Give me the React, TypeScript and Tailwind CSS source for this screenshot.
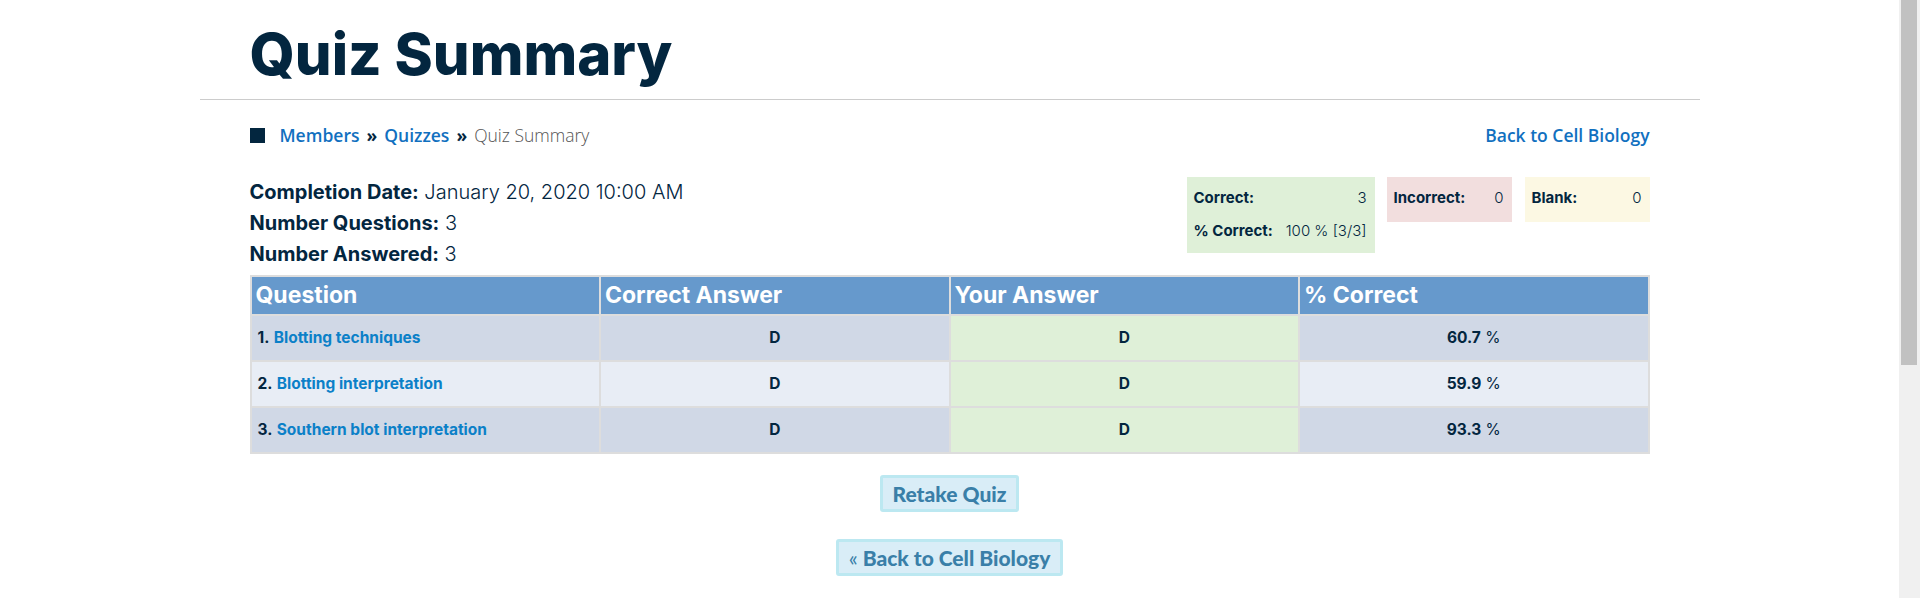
import React from "react";

const navy = "text-[#03263f]";

function Breadcrumbs() {
  return (
    <div className="flex items-center justify-between h-[30px] mt-[20px] font-['Open_Sans',sans-serif] text-[17.5px]">
      <div className="flex items-center">
        <span className="block w-[15px] h-[15px] bg-[#03263f]" />
        <a className="ml-[15px] font-semibold text-[#1170bf]">Members</a>
        <span className={`mx-[7px] font-bold ${navy}`}>»</span>
        <a className="font-semibold text-[#1170bf]">Quizzes</a>
        <span className={`mx-[7px] font-bold ${navy}`}>»</span>
        <span className="font-light text-[#555555]">Quiz Summary</span>
      </div>
      <a className="font-semibold text-[#1170bf]">Back to Cell Biology</a>
    </div>
  );
}

function Info() {
  return (
    <div className={`font-['Inter',sans-serif] text-[20px] leading-[31px] ${navy}`}>
      <div>
        <span className="font-bold">Completion Date:</span>{" "}
        <span className="font-light">January 20, 2020 10:00 AM</span>
      </div>
      <div>
        <span className="font-bold">Number Questions:</span> <span className="font-light">3</span>
      </div>
      <div>
        <span className="font-bold">Number Answered:</span> <span className="font-light">3</span>
      </div>
    </div>
  );
}

function Stats() {
  return (
    <div className={`flex items-start font-['Inter',sans-serif] text-[15px] leading-[33px] ${navy}`}>
      <div className="bg-[#dff0d8] pt-[4px] pb-[6px] pl-[7px] pr-[8px] w-[188px] grid grid-cols-[auto_1fr] gap-x-[6px]">
        <span className="font-bold">Correct:</span>
        <span className="text-right font-light">3</span>
        <span className="font-bold">% Correct:</span>
        <span className="text-right font-light">100 % [3/3]</span>
      </div>
      <div className="ml-[12px] bg-[#f2dede] pt-[4px] pb-[8px] pl-[7px] pr-[8px] w-[125px] flex justify-between">
        <span className="font-bold">Incorrect:</span>
        <span className="font-light">0</span>
      </div>
      <div className="ml-[13px] bg-[#fcf8e3] pt-[4px] pb-[8px] pl-[7px] pr-[8px] w-[125px] flex justify-between">
        <span className="font-bold">Blank:</span>
        <span className="font-light">0</span>
      </div>
    </div>
  );
}

const rows = [
  { n: "1.", q: "Blotting techniques", c: "D", y: "D", p: "60.7", bg: "bg-[#d0d8e6]" },
  { n: "2.", q: "Blotting interpretation", c: "D", y: "D", p: "59.9", bg: "bg-[#e8edf5]" },
  { n: "3.", q: "Southern blot interpretation", c: "D", y: "D", p: "93.3", bg: "bg-[#d0d8e6]" },
];

function ResultsTable() {
  const th = "border-2 border-[#dddddd] bg-[#6699cc] text-white text-left font-bold text-[23px] h-[39px] px-[4px] py-0 leading-[35px]";
  const td = "border-2 border-[#dddddd] h-[46px] px-[6px] py-0";
  return (
    <table className={`w-full table-fixed border-collapse mt-[5px] font-['Inter',sans-serif] ${navy}`}>
      <thead>
        <tr>
          <th className={th}>Question</th>
          <th className={th}>Correct Answer</th>
          <th className={th}>Your Answer</th>
          <th className={th}>% Correct</th>
        </tr>
      </thead>
      <tbody>
        {rows.map((r) => (
          <tr key={r.n} className={`${r.bg} text-[15.5px]`}>
            <td className={td}>
              <span className="font-bold">{r.n}</span>{" "}
              <a className="font-bold text-[#0b80c8]">{r.q}</a>
            </td>
            <td className={`${td} text-center font-bold`}>{r.c}</td>
            <td className={`${td} text-center font-bold bg-[#dff0d8]`}>{r.y}</td>
            <td className={`${td} text-center`}>
              <span className="font-bold">{r.p}</span> <span className="font-normal">%</span>
            </td>
          </tr>
        ))}
      </tbody>
    </table>
  );
}

function Buttons() {
  const btn =
    "h-[37px] px-[10px] flex items-center bg-[#d9edf7] border-[3px] border-[#bce8f1] rounded-[3px] text-[#3a7fa8] font-black text-[21px] font-['Lato',sans-serif]";
  return (
    <div className="flex flex-col items-center mt-[21px]">
      <button className={btn}>Retake Quiz</button>
      <button className={`${btn} mt-[27px]`}>
        <span className="font-normal mr-[5px]">«</span>Back to Cell Biology
      </button>
    </div>
  );
}

export default function App() {
  return (
    <div className="flex w-full h-[598px] overflow-hidden bg-white">
      <div className="flex-1 min-w-0">
        <div className="w-[1500px] mx-auto">
          <div className="px-[50px] pt-[25px]">
            <h1 className={`font-['Inter',sans-serif] font-extrabold text-[58px] leading-[58px] ${navy}`}>
              Quiz Summary
            </h1>
          </div>
          <div className="mt-[16px] h-px bg-[#cccccc]" />
          <div className="px-[50px]">
            <Breadcrumbs />
            <div className="flex justify-between items-start mt-[27px]">
              <Info />
              <Stats />
            </div>
            <ResultsTable />
            <Buttons />
          </div>
        </div>
      </div>
      <div className="w-[21px] h-full bg-[#f0f0f0] pl-[2px] pr-[3px]">
        <div className="h-[365px] bg-[#c1c1c1]" />
      </div>
    </div>
  );
}
